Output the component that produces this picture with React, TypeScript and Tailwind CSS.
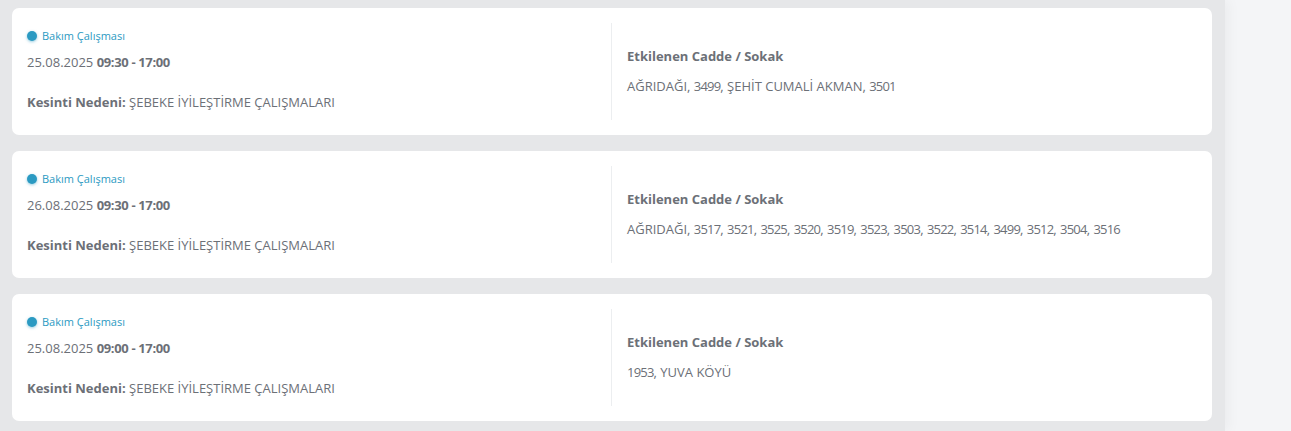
import React from 'react';

type Outage = {
  date: string;
  time: string;
  reason: string;
  streets: string;
};

const outages: Outage[] = [
  {
    date: '25.08.2025',
    time: '09:30 - 17:00',
    reason: 'ŞEBEKE İYİLEŞTİRME ÇALIŞMALARI',
    streets: 'AĞRIDAĞI, 3499, ŞEHİT CUMALİ AKMAN, 3501',
  },
  {
    date: '26.08.2025',
    time: '09:30 - 17:00',
    reason: 'ŞEBEKE İYİLEŞTİRME ÇALIŞMALARI',
    streets:
      'AĞRIDAĞI, 3517, 3521, 3525, 3520, 3519, 3523, 3503, 3522, 3514, 3499, 3512, 3504, 3516',
  },
  {
    date: '25.08.2025',
    time: '09:00 - 17:00',
    reason: 'ŞEBEKE İYİLEŞTİRME ÇALIŞMALARI',
    streets: '1953, YUVA KÖYÜ',
  },
];

// digits in the original font are narrower, so tighten the number runs a little
function Streets({ text }: { text: string }) {
  return (
    <>
      {text.split(/(\d+)/).map((part, i) =>
        /^\d+$/.test(part) ? (
          <span key={i} className="tracking-[-0.8px]">
            {part}
          </span>
        ) : (
          <span key={i}>{part}</span>
        ),
      )}
    </>
  );
}

function OutageCard({ item }: { item: Outage }) {
  return (
    <div className="flex h-[127px] w-[1200px] rounded-[7px] bg-white px-[15px] py-[15px]">
      {/* left: type, date, reason */}
      <div className="flex w-[584px] flex-col pt-[5px]">
        <div className="flex h-4 items-center gap-[5px]">
          <span className="h-[10px] w-[10px] rounded-full bg-[#2b9ac2] shadow-[0_1px_3px_rgba(43,154,194,0.5)]" />
          <span className="text-[11px] font-medium text-[#2b9ac2]">Bakım Çalışması</span>
        </div>
        <div className="mt-[8px] h-5 text-[13px] leading-5 text-[#6c7077]">
          {item.date} <b className="font-bold tracking-[-0.35px]">{item.time}</b>
        </div>
        <div className="mt-5 h-5 text-[13px] leading-5 text-[#6c7077]">
          <b className="font-bold">Kesinti Nedeni:</b> {item.reason}
        </div>
      </div>

      {/* right: affected streets */}
      <div className="flex flex-1 flex-col justify-center border-l border-[#eceef0] pb-[2px] pl-[15px]">
        <div className="h-5 text-[13px] font-bold leading-5 text-[#6c7077]">Etkilenen Cadde / Sokak</div>
        <div className="mt-[10px] h-5 text-[13px] leading-5 text-[#6c7077]">
          <Streets text={item.streets} />
        </div>
      </div>
    </div>
  );
}

export default function App() {
  return (
    <div
      className="flex h-[431px] w-[1291px] overflow-hidden bg-[#f4f5f7]"
      style={{ fontFamily: '"Open Sans", "Noto Sans", sans-serif' }}
    >
      <div className="flex h-full w-[1225px] flex-col gap-4 bg-[#e6e7e9] pl-3 pt-2 shadow-[4px_0_12px_rgba(0,0,0,0.04)]">
        {outages.map((item, i) => (
          <OutageCard key={i} item={item} />
        ))}
      </div>
    </div>
  );
}
